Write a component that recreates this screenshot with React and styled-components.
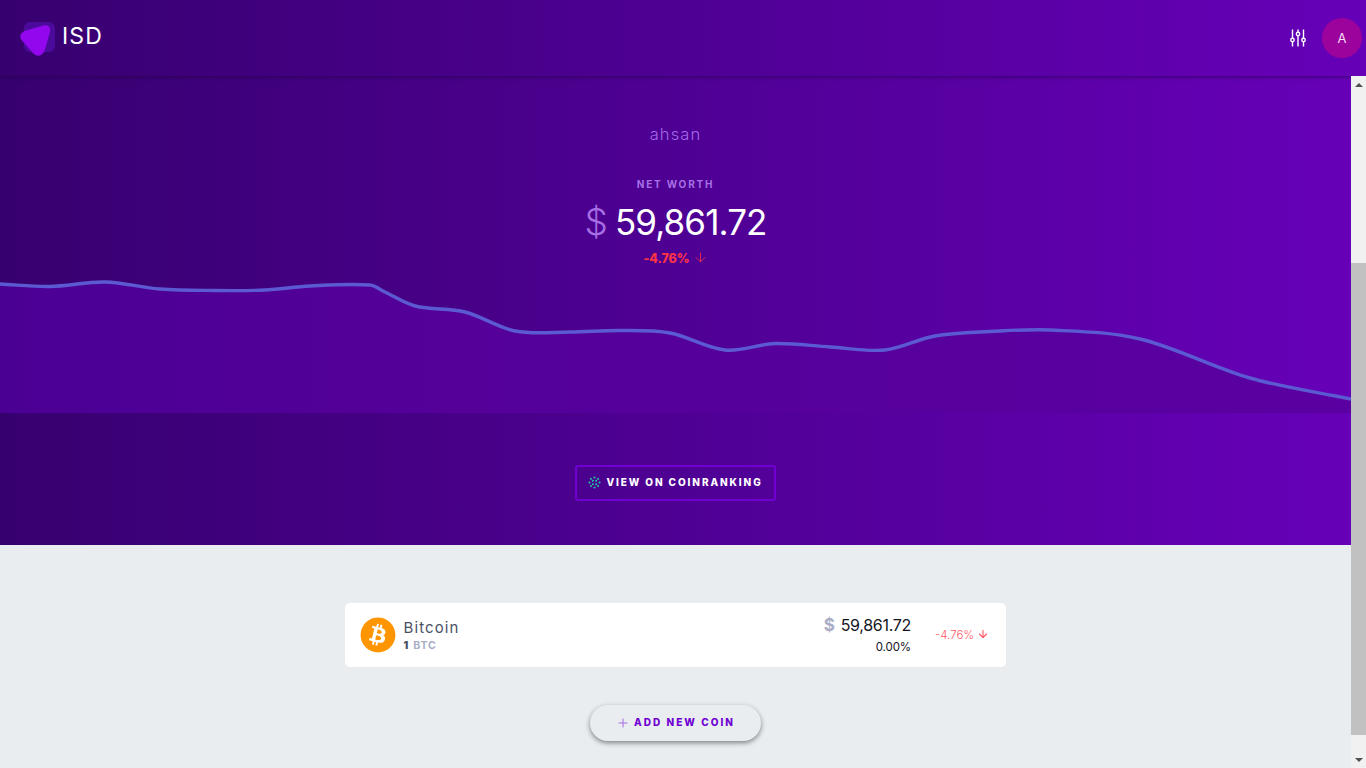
import React from 'react';
import styled, { createGlobalStyle } from 'styled-components';
import { FaBitcoin } from 'react-icons/fa';
import { FiArrowDown, FiPlus } from 'react-icons/fi';

const Global = createGlobalStyle`
  html, body { margin: 0; padding: 0; height: 100%; overflow: hidden; }
  body { font-family: Inter, "Open Sans", "Liberation Sans", sans-serif; background: #e9edf0; }
  * { box-sizing: border-box; }
`;

const Page = styled.div`
  display: flex; flex-direction: column; width: 1366px; height: 768px; overflow: hidden;
`;
const Header = styled.header`
  position: relative; z-index: 2; flex: 0 0 76px; height: 76px;
  display: flex; align-items: center; justify-content: space-between;
  padding: 0 4px 0 19px;
  background: linear-gradient(90deg, #37006f, #6600b8);
  box-shadow: 0 1px 4px rgba(30, 0, 60, .55);
`;
const Brand = styled.div`display: flex; align-items: center; gap: 6px;`;
const BrandName = styled.span`
  color: #fff; font-size: 23px; font-weight: 400; letter-spacing: 1.1px; line-height: 1; position: relative; top: -2px;
`;
const Actions = styled.div`display: flex; align-items: center; gap: 16px;`;
const Avatar = styled.div`
  width: 40px; height: 40px; border-radius: 50%; background: #9c029c; color: #f3dff3;
  display: flex; align-items: center; justify-content: center; font-size: 13px;
`;
const Body = styled.div`display: flex; flex: 1; min-height: 0;`;
const Main = styled.main`flex: 1; min-width: 0; display: flex; flex-direction: column; align-items: stretch;`;
const Hero = styled.section`
  flex: 0 0 469px; display: flex; flex-direction: column;
  background: linear-gradient(90deg, #37006f, #6600b8);
`;
const Summary = styled.div`
  height: 200px; padding-top: 49px; display: flex; flex-direction: column; align-items: center;
`;
const Owner = styled.div`
  color: #a468ea; font-size: 16.5px; font-weight: 300; letter-spacing: 1.1px; line-height: 18px;
`;
const Label = styled.div`
  margin-top: 35px; color: #a870e6; font-size: 10px; font-weight: 700; letter-spacing: 1.8px; line-height: 12px;
`;
const Amount = styled.div`
  margin-top: 10px; display: flex; align-items: baseline; gap: 8px; color: #fff;
  font-size: 35px; font-weight: 400; line-height: 44px; letter-spacing: -.9px;
`;
const Currency = styled.span`color: #a56ee4; font-weight: 300; font-size: 37px;`;
const Change = styled.div`
  margin-top: 7px; display: flex; align-items: center; gap: 3px; color: #ff3347;
  font-size: 12.5px; font-weight: 800; line-height: 16px; letter-spacing: -.05px;
  svg { width: 15px; height: 15px; stroke-width: 1.3; margin-top: -3px; }
`;
const Chart = styled.svg`display: block; flex: 0 0 137px; width: 100%; height: 137px;`;
const HeroFoot = styled.div`flex: 1; display: flex; justify-content: center; padding-top: 52px;`;
const RankButton = styled.a`
  width: 201px; height: 36px; border: 2px solid #7000d2; border-radius: 3px; padding-bottom: 2px;
  display: flex; align-items: center; justify-content: center; gap: 5px;
  color: #fff; font-size: 10px; font-weight: 800; letter-spacing: 1.9px;
`;
const List = styled.section`
  flex: 1; display: flex; flex-direction: column; align-items: center; padding-top: 58px;
`;
const CoinCard = styled.article`
  width: 661px; height: 64px; background: #fff; border-radius: 5px;
  display: flex; align-items: center; padding: 0 17px 0 15px;
`;
const CoinIcon = styled(FaBitcoin)`width: 36px; height: 36px; color: #ff9500; background: #fff; border-radius: 50%;`;
const CoinText = styled.div`margin-left: 7.5px; flex: 1; display: flex; flex-direction: column; gap: 2px;`;
const CoinName = styled.div`color: #4a5064; font-size: 15px; font-weight: 400; letter-spacing: 1.1px; line-height: 18px;`;
const CoinAmount = styled.div`
  color: #a9aec6; font-size: 10.5px; font-weight: 700; letter-spacing: .9px; line-height: 13px;
  b { color: #4a5064; margin-right: 4px; }
`;
const Prices = styled.div`display: flex; flex-direction: column; align-items: flex-end; gap: 5px; padding-bottom: 2px;`;
const Price = styled.div`
  color: #14141e; font-size: 16px; line-height: 20px; letter-spacing: -.3px; display: flex; gap: 6px; align-items: baseline;
`;
const PriceSign = styled.span`color: #a9aec6; font-weight: 700; font-size: 17px;`;
const Share = styled.div`color: #14141e; font-size: 11.5px; line-height: 14px; letter-spacing: -.1px;`;
const CoinChange = styled.div`
  margin-left: 24px; width: 54px; display: flex; align-items: center; justify-content: space-between;
  color: #ff5565; font-size: 11.5px; font-weight: 300;
  svg { width: 12px; height: 12px; stroke-width: 2.2; margin-top: -3px; }
`;
const AddButton = styled.button`
  margin-top: 38px; width: 171px; height: 36px; border: 0; border-radius: 18px; background: #e9edf0;
  box-shadow: 0 2px 5px rgba(0, 0, 0, .45); padding: 0 0 2px;
  display: flex; align-items: center; justify-content: center; gap: 4px;
  color: #7000d2; font-family: inherit; font-size: 10px; font-weight: 800; letter-spacing: 2.05px;
  svg { width: 14px; height: 14px; color: #a56ee4; stroke-width: 1.8; margin-top: 2px; }
`;
const Scrollbar = styled.div`
  position: relative; z-index: 3; flex: 0 0 15px; background: #f1f1f1;
  display: flex; flex-direction: column; align-items: center; justify-content: space-between;
`;
const ScrollButton = styled.div`
  height: 17px; width: 100%; display: flex; align-items: center; justify-content: center;
  &::before {
    content: ''; width: 0; height: 0; border-left: 4px solid transparent; border-right: 4px solid transparent;
    ${p => p.$down ? 'border-top: 4px solid #505050;' : 'border-bottom: 4px solid #505050;'}
  }
`;
const Track = styled.div`flex: 1; width: 100%; display: flex; flex-direction: column; padding-top: 170px; padding-bottom: 16px;`;
const Thumb = styled.div`flex: 1; background: #c1c1c1;`;

const pts = [[0,8],[50,10.5],[105,6],[160,13],[215,14.5],[265,14],[310,10],[370,9],[385,16],[415,30],[465,36],[515,55],[570,56],[620,54.5],[670,57],[725,74],[775,67.5],[830,71],[885,74],[935,60],[990,55.5],[1050,54],[1140,63],[1250,102],[1351,123]];
function smooth(p) {
  let d = `M${p[0][0]} ${p[0][1]}`;
  for (let i = 0; i < p.length - 1; i++) {
    const a = p[Math.max(i - 1, 0)], b = p[i], c = p[i + 1], e = p[Math.min(i + 2, p.length - 1)];
    const dx = (c[0] - b[0]) / 3;
    const m1 = (c[1] - a[1]) / (c[0] - a[0]);
    const m2 = (e[1] - b[1]) / (e[0] - b[0]);
    d += ` C${b[0] + dx} ${(b[1] + m1 * dx).toFixed(1)} ${c[0] - dx} ${(c[1] - m2 * dx).toFixed(1)} ${c[0]} ${c[1]}`;
  }
  return d;
}
const line = smooth(pts);

const Logo = () => (
  <svg width="37" height="37" viewBox="0 0 37 37">
    <rect x="5" y="2" width="31" height="30" rx="6" fill="#4c0a9c" />
    <path d="M7 10.5 L24.5 5.5 C29 4.5 32 7 31 11.5 L26 29.5 C24 36.5 17.5 37.5 13.5 32.5 L2.5 20 C-0.5 16 2 12 7 10.5 Z" fill="#9207ee" />
  </svg>
);
const Sliders = () => (
  <svg width="16" height="18" viewBox="0 0 16 18" fill="none" stroke="#fff" strokeWidth="1.4">
    <path d="M2.5 0.5V17.5M8 0.5V17.5M13.5 0.5V17.5" />
    <circle cx="2.5" cy="11" r="1.7" fill="#6000b0" />
    <circle cx="8" cy="5" r="1.7" fill="#6000b0" />
    <circle cx="13.5" cy="11" r="1.7" fill="#6000b0" />
  </svg>
);
const RankIcon = () => (
  <svg width="13" height="13" viewBox="0 0 13 13">
    {[0,45,90,135,180,225,270,315].map((a, i) => {
      const r = a * Math.PI / 180;
      return <circle key={a} cx={6.5 + 5 * Math.cos(r)} cy={6.5 + 5 * Math.sin(r)} r="1.1" fill={i % 2 ? '#2aa8a0' : '#1bc8a0'} />;
    })}
    {[45,135,225,315].map(a => {
      const r = a * Math.PI / 180;
      return <circle key={a} cx={6.5 + 2.4 * Math.cos(r)} cy={6.5 + 2.4 * Math.sin(r)} r="1" fill="#20d0a8" />;
    })}
  </svg>
);

export default function App() {
  return (
    <Page>
      <Global />
      <Header>
        <Brand><Logo /><BrandName>ISD</BrandName></Brand>
        <Actions><Sliders /><Avatar>A</Avatar></Actions>
      </Header>
      <Body>
        <Main>
          <Hero>
            <Summary>
              <Owner>ahsan</Owner>
              <Label>NET WORTH</Label>
              <Amount><Currency>$</Currency>59,861.72</Amount>
              <Change>-4.76% <FiArrowDown /></Change>
            </Summary>
            <Chart viewBox="0 0 1351 137" preserveAspectRatio="none">
              <defs>
                <linearGradient id="area" x1="0" x2="1" y1="0" y2="0">
                  <stop offset="0" stopColor="#4b0094" />
                  <stop offset=".33" stopColor="#540099" />
                  <stop offset="1" stopColor="#5a00a2" />
                </linearGradient>
              </defs>
              <path d={`${line} L1351 137 L0 137 Z`} fill="url(#area)" />
              <path d={line} fill="none" stroke="#5c5ad2" strokeWidth="3.4" />
            </Chart>
            <HeroFoot>
              <RankButton><RankIcon />VIEW ON COINRANKING</RankButton>
            </HeroFoot>
          </Hero>
          <List>
            <CoinCard>
              <CoinIcon />
              <CoinText>
                <CoinName>Bitcoin</CoinName>
                <CoinAmount><b>1</b>BTC</CoinAmount>
              </CoinText>
              <Prices>
                <Price><PriceSign>$</PriceSign>59,861.72</Price>
                <Share>0.00%</Share>
              </Prices>
              <CoinChange>-4.76% <FiArrowDown /></CoinChange>
            </CoinCard>
            <AddButton><FiPlus />ADD NEW COIN</AddButton>
          </List>
        </Main>
        <Scrollbar>
          <ScrollButton />
          <Track><Thumb /></Track>
          <ScrollButton $down />
        </Scrollbar>
      </Body>
    </Page>
  );
}
